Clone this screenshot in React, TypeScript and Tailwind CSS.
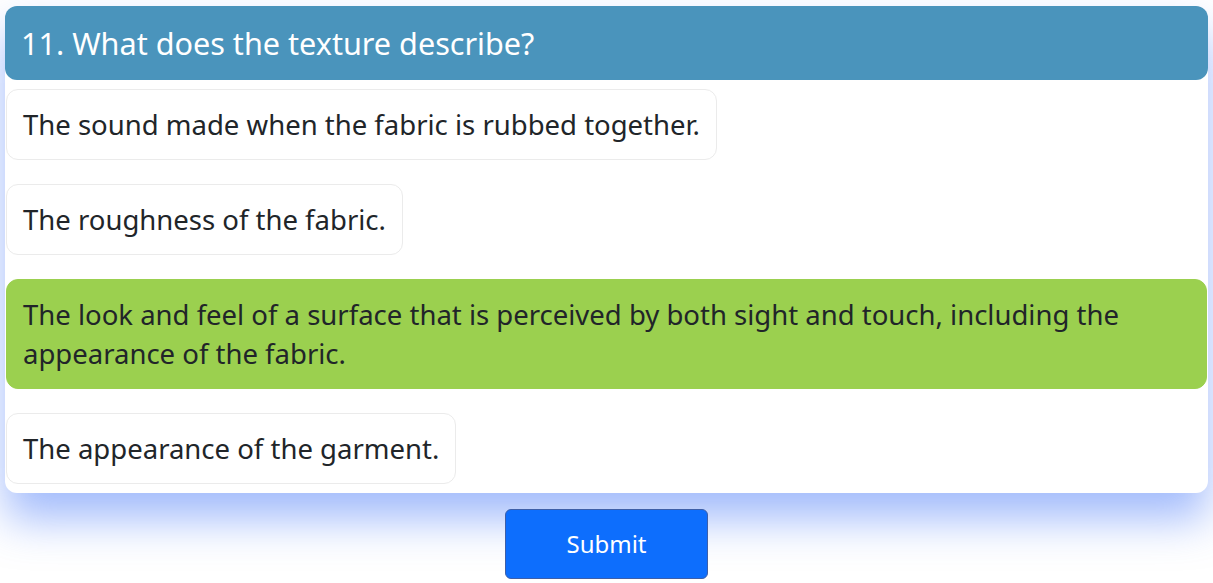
import React, { useState } from 'react';

const OPTIONS = [
  'The sound made when the fabric is rubbed together.',
  'The roughness of the fabric.',
  'The look and feel of a surface that is perceived by both sight and touch, including the appearance of the fabric.',
  'The appearance of the garment.',
];

export default function App() {
  const [selected, setSelected] = useState(2);

  return (
    <div className="min-h-screen bg-white pt-[6px] px-[5px] font-['Noto_Sans',sans-serif] text-[#212529]">
      {/* Question card */}
      <div className="rounded-xl bg-white shadow-[0_26px_44px_rgba(70,120,250,0.5)]">
        <div className="rounded-xl bg-[#4a94bc] px-4 py-4 text-[30.6px] leading-[42px] text-white">
          11. What does the texture describe?
        </div>
        <div className="flex flex-col items-start gap-6 px-px pt-[9px] pb-[9px]">
          {OPTIONS.map((opt, i) => (
            <button
              key={i}
              onClick={() => setSelected(i)}
              className={`rounded-xl border px-4 py-[15px] text-left text-[27.5px] leading-[39px] ${
                selected === i
                  ? 'w-full border-[#9bd04f] bg-[#9bd04f]'
                  : 'border-[#ebebeb] bg-white'
              }`}
            >
              {opt}
            </button>
          ))}
        </div>
      </div>

      {/* Submit */}
      <div className="flex justify-center pt-4">
        <button className="h-[70px] w-[203px] rounded-md border border-[#3d5fa8] bg-[#0d6efd] text-[24px] text-white">
          Submit
        </button>
      </div>
    </div>
  );
}
